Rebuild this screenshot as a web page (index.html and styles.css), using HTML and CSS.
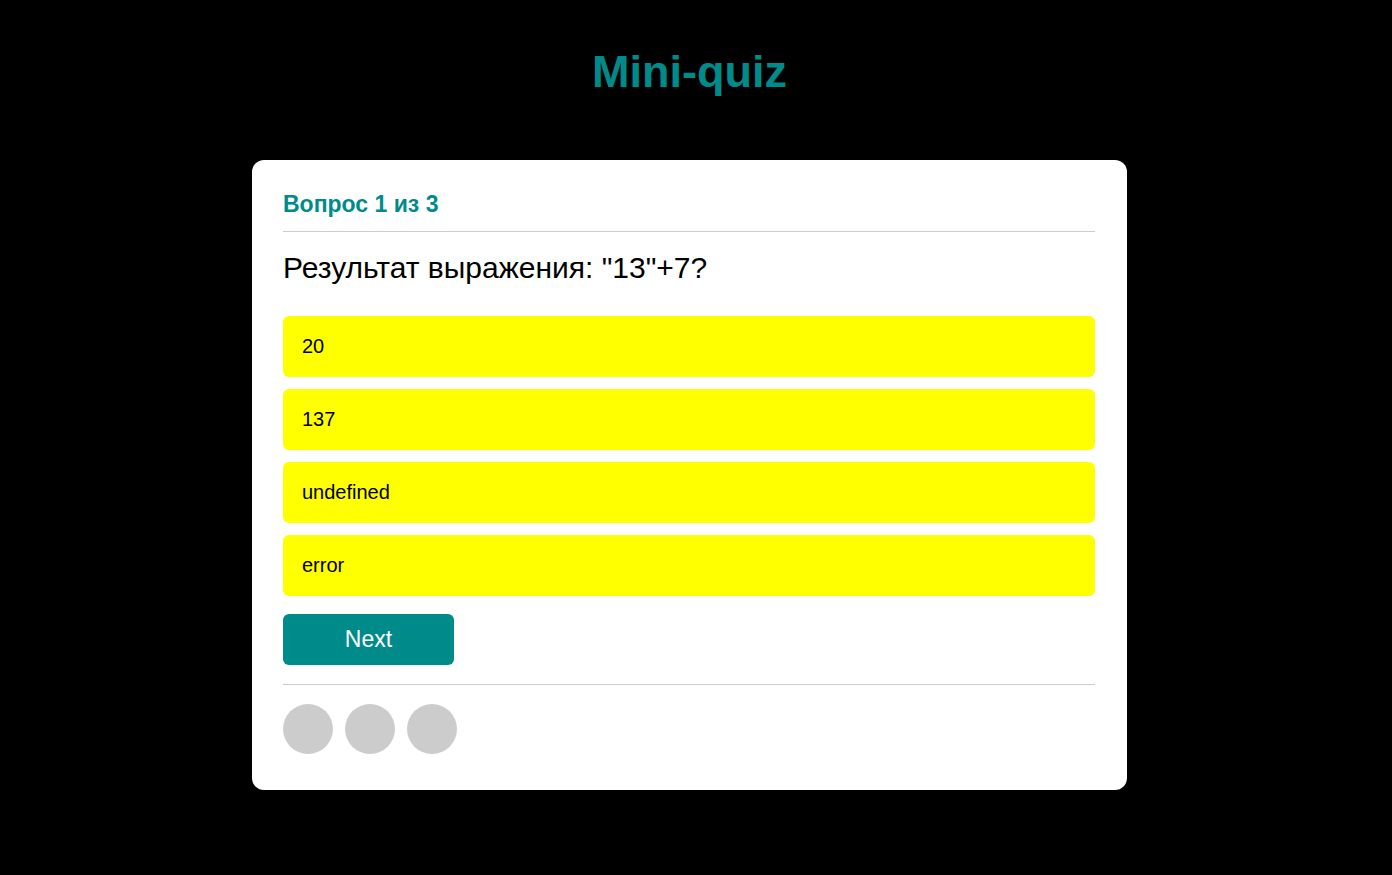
FILE: index.html
```html
<!DOCTYPE html>
<html lang="ru">
<head>
<meta charset="utf-8">
<title>Mini-quiz</title>
<link rel="stylesheet" href="styles.css">
</head>
<body>
<main class="quiz">
  <h1 class="quiz-title">Mini-quiz</h1>
  <section class="card">
    <h2 class="counter">Вопрос 1 из 3</h2>
    <p class="question">Результат выражения: "13"+7?</p>
    <div class="options">
      <button class="option" type="button">20</button>
      <button class="option" type="button">137</button>
      <button class="option" type="button">undefined</button>
      <button class="option" type="button">error</button>
    </div>
    <button class="next" type="button">Next</button>
    <div class="tracker">
      <span class="dot"></span>
      <span class="dot"></span>
      <span class="dot"></span>
    </div>
  </section>
</main>
</body>
</html>
```
FILE: styles.css
```css
* {
  box-sizing: border-box;
}

body {
  margin: 0;
  padding: 0 13px 0 0;
  background: #000;
  color: #000;
  font-family: "Liberation Sans", Arial, sans-serif;
}

.quiz {
  display: flex;
  flex-direction: column;
  align-items: center;
  padding: 44px 16px;
}

.quiz-title {
  margin: 0 0 60px;
  color: #008b8b;
  font-size: 45px;
  line-height: 56px;
}

.card {
  width: 100%;
  max-width: 875px;
  padding: 31px 32px 36px 31px;
  border-radius: 12px;
  background: #fff;
}

.counter {
  margin: 0;
  padding-bottom: 14px;
  border-bottom: 1px solid #ccc;
  color: #008b8b;
  font-size: 23px;
  line-height: 26px;
}

.question {
  margin: 18px 0 30px;
  font-size: 30px;
  line-height: 36px;
}

.options {
  display: grid;
  gap: 12px;
  margin-bottom: 18px;
}

.option {
  padding: 18px 19px;
  border: 0;
  border-radius: 6px;
  background: #ff0;
  color: #000;
  font: 20px/25px "Liberation Sans", Arial, sans-serif;
  text-align: left;
  cursor: pointer;
}

.next {
  display: block;
  width: 171px;
  padding: 12px;
  border: 0;
  border-radius: 6px;
  background: #008b8b;
  color: #fff;
  font: 23px/27px "Liberation Sans", Arial, sans-serif;
  cursor: pointer;
}

.tracker {
  display: flex;
  gap: 12px;
  margin-top: 19px;
  padding-top: 19px;
  border-top: 1px solid #ccc;
}

.dot {
  width: 50px;
  height: 50px;
  border-radius: 50%;
  background: #ccc;
}
```
